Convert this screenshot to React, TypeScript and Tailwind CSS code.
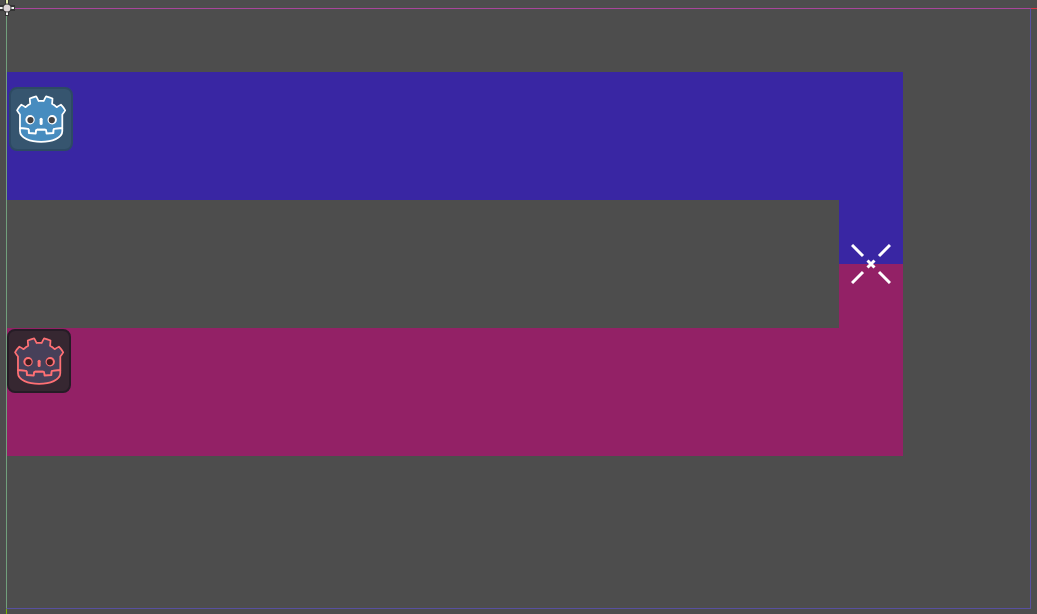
type SpriteColors = {
  card: string;
  border: string;
  face: string;
  line: string;
  eyeRing: string;
  pupil: string;
};

const blueSprite: SpriteColors = {
  card: '#36556f',
  border: '#2d4a63',
  face: '#478cbf',
  line: '#ffffff',
  eyeRing: '#ffffff',
  pupil: '#414042',
};

const redSprite: SpriteColors = {
  card: '#362731',
  border: '#261c26',
  face: '#474059',
  line: '#ff7074',
  eyeRing: '#ff7074',
  pupil: '#411d1f',
};

function Sprite({ colors, label }: { colors: SpriteColors; label: string }) {
  return (
    <svg className="block size-16 shrink-0" viewBox="0 0 128 128" role="img" aria-label={label}>
      <rect x="2" y="2" width="124" height="124" rx="14" fill={colors.card} stroke={colors.border} strokeWidth="4" />
      <g transform="scale(.104) translate(106 103)">
        <g fill={colors.face} stroke={colors.line} strokeWidth="34" strokeLinejoin="round">
          <path d="m105 690 152 14q12 1 15 14l4 67 132 10 8-61q2-11 15-15h162q13 4 15 15l8 61 132-10 4-67q3-13 15-14l152-14V427q30-39 56-81-35-59-83-108-43 20-82 47-40-37-88-64 7-51 8-102-59-28-123-42-26 43-46 89-49-7-98 0-20-46-46-89-64 14-123 42 1 51 8 102-48 27-88 64-39-27-82-47-48 49-83 108 26 42 56 81z" />
          <path d="M105 690v55c0 276 814 276 814 0v-55l-152 14q-12 1-15 14l-4 67-132 10-8-61q-2-11-15-15H431q-13 4-15 15l-8 61-132-10-4-67q-3-13-15-14z" />
        </g>
        <g fill={colors.eyeRing}>
          <rect x="483" y="488" width="58" height="138" rx="29" />
          <circle cx="299" cy="526" r="90" />
          <circle cx="725" cy="526" r="90" />
        </g>
        <g fill={colors.pupil}>
          <circle cx="307" cy="532" r="60" />
          <circle cx="717" cy="532" r="60" />
        </g>
      </g>
    </svg>
  );
}

function OriginHandle() {
  return (
    <svg className="block h-4 w-4" viewBox="0 0 16 16" aria-hidden="true">
      <path d="M5 0h4v5h6v6H9v5H5v-5H0V5h5z" fill="#343434" />
      <path d="M6 0h2v4H6z" fill="#e5edae" />
      <path d="M6 12h2v3H6zM0 7h3v2H0zM11 7h3v2h-3z" fill="#f0f0f0" />
      <circle cx="7" cy="8" r="4.5" fill="#343434" />
      <circle cx="7" cy="8" r="3.5" fill="#ddd5d8" />
    </svg>
  );
}

function PivotMarker() {
  return (
    <svg className="relative block size-10" viewBox="0 0 40 40" role="img" aria-label="Marker">
      <g stroke="#fff" strokeWidth="3">
        <path d="M1 1l11 11M39 1L28 12M1 39l11-11M39 39L28 28" />
        <path d="M16.5 16.5l7 7M23.5 16.5l-7 7" />
      </g>
    </svg>
  );
}

export default function App() {
  return (
    <main className="relative min-h-screen overflow-hidden bg-[#4d4d4d] pl-[7px] pt-[72px]">
      <div className="flex w-4xl flex-col">
        <div className="flex h-32 items-start bg-[#3926a3] pl-[2px] pt-[15px]">
          <Sprite colors={blueSprite} label="Blue player" />
        </div>
        <div className="grid h-32 w-16 grid-rows-2 self-end">
          <div className="col-start-1 row-start-1 bg-[#3926a3]" />
          <div className="col-start-1 row-start-2 bg-[#932166]" />
          <div className="col-start-1 row-span-2 row-start-1 grid place-items-center">
            <PivotMarker />
          </div>
        </div>
        <div className="flex h-32 items-start bg-[#932166] pt-px">
          <Sprite colors={redSprite} label="Red player" />
        </div>
      </div>

      <div className="absolute inset-y-0 left-[6px] w-px bg-[#7eb400]" />
      <div className="absolute inset-x-0 top-[8px] h-px bg-[#dc3545]" />
      <div className="absolute bottom-[5px] left-[6px] right-[6px] top-[8px] border border-b-[#5850a0] border-l-[#719f7c] border-r-[#5850a0] border-t-[#a8469b]" />
      <div className="absolute left-0 top-0">
        <OriginHandle />
      </div>
    </main>
  );
}
